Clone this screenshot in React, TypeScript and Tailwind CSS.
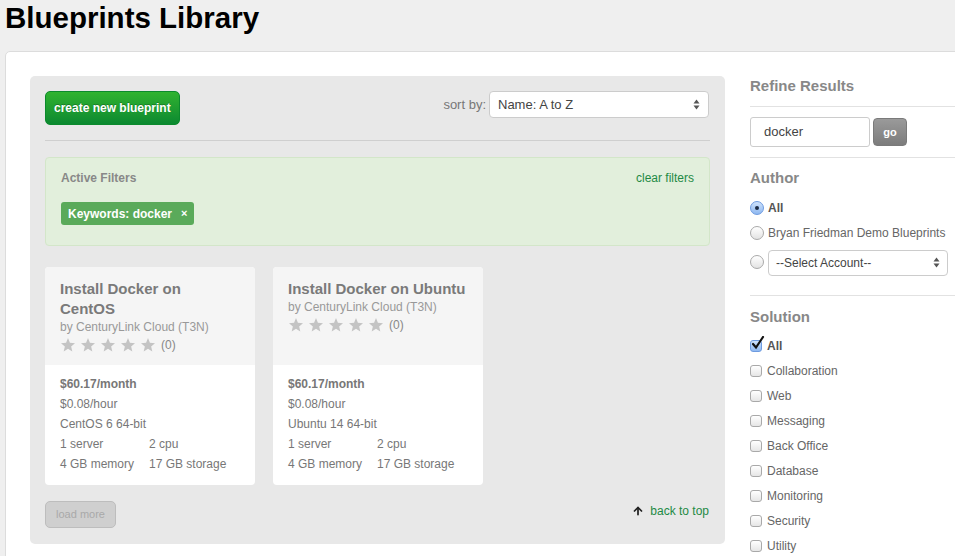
import { ArrowUp } from "lucide-react";

function SelectArrows() {
    return (
        <svg width="7" height="11" viewBox="0 0 7 11" className="shrink-0">
            <path d="M3.5 0.5 L6.5 4.5 L0.5 4.5 Z" fill="#555" />
            <path d="M3.5 10.5 L6.5 6.5 L0.5 6.5 Z" fill="#555" />
        </svg>
    );
}

function Star() {
    return (
        <svg width="16" height="16" viewBox="0 0 24 24">
            <path d="M12 1.5 L14.9 8.6 L22.5 9.2 L16.7 14.1 L18.5 21.6 L12 17.6 L5.5 21.6 L7.3 14.1 L1.5 9.2 L9.1 8.6 Z" fill="#c4c4c4" />
        </svg>
    );
}

function Checkbox({ checked }: { checked?: boolean }) {
    return (
        <span
            className={
                checked
                    ? "relative inline-block w-[12px] h-[12px] rounded-[3px] border border-[#6e9be0] bg-gradient-to-b from-[#cfe2fb] to-[#8fb8f0] shrink-0"
                    : "relative inline-block w-[12px] h-[12px] rounded-[3px] border border-[#a9a9a9] bg-gradient-to-b from-white to-[#e6e6e6] shrink-0"
            }
        >
            {checked && (
                <svg width="14" height="14" viewBox="0 0 14 14" className="absolute -top-[5px] left-[0px]">
                    <path d="M2 8 L5 11.5 L12 1" stroke="#111" strokeWidth="2.2" fill="none" strokeLinecap="round" />
                </svg>
            )}
        </span>
    );
}

function Radio({ checked }: { checked?: boolean }) {
    return (
        <span
            className={
                checked
                    ? "inline-flex items-center justify-center w-[14px] h-[14px] rounded-full border border-[#6e9be0] bg-gradient-to-b from-[#cfe2fb] to-[#8fb8f0] shrink-0"
                    : "inline-block w-[14px] h-[14px] rounded-full border border-[#a9a9a9] bg-gradient-to-b from-white to-[#e3e3e3] shrink-0"
            }
        >
            {checked && <span className="w-[4px] h-[4px] rounded-full bg-[#1c2b44]" />}
        </span>
    );
}

interface IBlueprint {
    title: React.ReactNode;
    os: string;
}

const blueprints: IBlueprint[] = [
    { title: <>Install Docker on<br />CentOS</>, os: "CentOS 6 64-bit" },
    { title: "Install Docker on Ubuntu", os: "Ubuntu 14 64-bit" },
];

const solutions = ["Collaboration", "Web", "Messaging", "Back Office", "Database", "Monitoring", "Security", "Utility"];

function BlueprintCard({ bp }: { bp: IBlueprint }) {
    return (
        <div className="w-[210px] h-[218px] bg-white rounded-[4px] overflow-hidden flex flex-col">
            <div className="bg-[#f5f5f5] h-[98px] px-[15px] pt-[12px]">
                <h3 className="text-[15px] leading-[20px] font-bold text-[#7a7a7a] whitespace-nowrap">{bp.title}</h3>
                <p className="text-[12px] leading-[16px] text-[#999]">by CenturyLink Cloud (T3N)</p>
                <div className="flex items-center gap-[4px] mt-[1px]">
                    <Star /><Star /><Star /><Star /><Star />
                    <span className="text-[12px] text-[#888] ml-[1px]">(0)</span>
                </div>
            </div>
            <div className="px-[15px] pt-[9px] text-[12px] leading-[20px] text-[#777]">
                <p className="font-bold">$60.17/month</p>
                <p>$0.08/hour</p>
                <p>{bp.os}</p>
                <div className="grid grid-cols-[89px_1fr]">
                    <span>1 server</span>
                    <span>2 cpu</span>
                    <span>4 GB memory</span>
                    <span>17 GB storage</span>
                </div>
            </div>
        </div>
    );
}

export default function App() {
    return (
        <div className="w-[955px] h-[556px] overflow-hidden bg-[#efefef] font-['Liberation_Sans',Arial,sans-serif]">
            <h1 className="pl-[5px] text-[29.5px] leading-[36px] font-bold text-black">Blueprints Library</h1>

            <div className="ml-[5px] mt-[15px] w-[1000px] h-[600px] bg-white border border-[#dcdcdc] rounded-tl-[5px] p-[24px] flex gap-[25px]">
                {/* main column */}
                <div className="w-[695px] h-[468px] bg-[#e8e8e8] rounded-[5px] p-[15px] flex flex-col">
                    <div className="flex items-start justify-between">
                        <button className="h-[34px] px-[8px] rounded-[5px] border border-[#0b8a2c] bg-gradient-to-b from-[#2fb32f] to-[#0a8930] text-white text-[12px] font-bold [text-shadow:0_-1px_0_rgba(0,0,0,0.25)]">
                            create new blueprint
                        </button>
                        <div className="flex items-center gap-[3px] mr-[1px]">
                            <span className="text-[13px] text-[#777]">sort by:</span>
                            <div className="w-[220px] h-[27px] bg-white border border-[#ccc] rounded-[4px] flex items-center justify-between pl-[8px] pr-[8px]">
                                <span className="text-[13px] text-[#444]">Name: A to Z</span>
                                <SelectArrows />
                            </div>
                        </div>
                    </div>

                    <div className="border-t border-[#cfcfcf] mt-[15px]" />

                    <div className="mt-[16px] h-[89px] bg-[#e2efdc] border border-[#d3e6c9] rounded-[4px] px-[15px] pt-[11px]">
                        <div className="flex items-center justify-between">
                            <span className="text-[12px] font-bold text-[#888]">Active Filters</span>
                            <span className="text-[12px] text-[#1e8a45]">clear filters</span>
                        </div>
                        <div className="mt-[15px] inline-flex items-center h-[23px] px-[7px] rounded-[3px] bg-[#5aaa5a] text-white text-[12px] font-bold">
                            Keywords: docker
                            <span className="ml-[9px] text-[11px]">×</span>
                        </div>
                    </div>

                    <div className="mt-[21px] flex gap-[18px]">
                        {blueprints.map((bp, i) => (
                            <BlueprintCard key={i} bp={bp} />
                        ))}
                    </div>

                    <div className="mt-[16px] flex items-center justify-between">
                        <button className="h-[27px] w-[71px] rounded-[5px] border border-[#bdbdbd] bg-[#cfcfcf] text-[11px] text-[#a9a9a9]">
                            load more
                        </button>
                        <span className="flex items-center gap-[6px] text-[12px] text-[#1e8a45] mb-[7px] mr-[1px]">
                            <ArrowUp className="w-[12px] h-[12px] text-[#222]" strokeWidth={3.5} />
                            back to top
                        </span>
                    </div>
                </div>

                {/* sidebar */}
                <div className="w-[230px] flex flex-col">
                    <h2 className="text-[15px] leading-[20px] font-bold text-[#888]">Refine Results</h2>
                    <div className="border-t border-[#e2e2e2] mt-[10px]" />
                    <div className="mt-[10px] flex items-center gap-[3px]">
                        <div className="w-[120px] h-[30px] border border-[#ccc] rounded-[3px] flex items-center pl-[13px] text-[13px] text-[#444]">
                            docker
                        </div>
                        <button className="w-[34px] h-[28px] rounded-[4px] border border-[#7a7a7a] bg-gradient-to-b from-[#9a9a9a] to-[#7c7c7c] text-white text-[11px] font-bold">
                            go
                        </button>
                    </div>
                    <div className="border-t border-[#e2e2e2] mt-[10px]" />

                    <h2 className="mt-[10px] text-[15px] leading-[20px] font-bold text-[#888]">Author</h2>
                    <div className="mt-[7px] h-[25px] flex items-center gap-[4px]">
                        <Radio checked />
                        <span className="text-[12px] font-bold text-[#555]">All</span>
                    </div>
                    <div className="h-[25px] flex items-center gap-[4px]">
                        <Radio />
                        <span className="text-[12px] text-[#666]">Bryan Friedman Demo Blueprints</span>
                    </div>
                    <div className="mt-[4px] flex items-center gap-[4px]">
                        <span className="self-start mt-[3px]"><Radio /></span>
                        <div className="w-[180px] h-[26px] bg-white border border-[#ccc] rounded-[4px] flex items-center justify-between pl-[7px] pr-[7px]">
                            <span className="text-[12px] text-[#444]">--Select Account--</span>
                            <SelectArrows />
                        </div>
                    </div>
                    <div className="border-t border-[#e2e2e2] mt-[19px]" />

                    <h2 className="mt-[11px] text-[15px] leading-[20px] font-bold text-[#888]">Solution</h2>
                    <div className="mt-[6px] h-[25px] flex items-center gap-[5px]">
                        <Checkbox checked />
                        <span className="text-[12px] font-bold text-[#555]">All</span>
                    </div>
                    {solutions.map((s) => (
                        <div key={s} className="h-[25px] flex items-center gap-[5px]">
                            <Checkbox />
                            <span className="text-[12px] text-[#666]">{s}</span>
                        </div>
                    ))}
                </div>
            </div>
        </div>
    );
}
